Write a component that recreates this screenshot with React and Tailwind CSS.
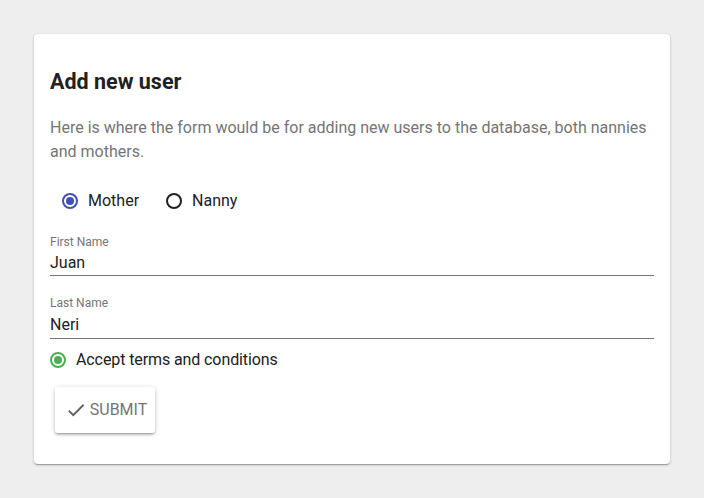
export default function App() {
  return (
    <div className="min-h-[498px] w-full bg-[#eeeeee] pt-[34px] pl-[34px] font-['Roboto',sans-serif]">
      <div className="w-[636px] h-[430px] rounded-[4px] bg-white shadow-[0_1px_3px_rgba(0,0,0,0.2),0_1px_1px_rgba(0,0,0,0.14),0_2px_1px_-1px_rgba(0,0,0,0.12)] px-4 pt-[34px]">
        <h2 className="text-[21.5px] leading-7 font-bold text-[#212121]">Add new user</h2>
        <p className="mt-5 text-[16px] leading-6 text-[#757575]">
          Here is where the form would be for adding new users to the database, both nannies and mothers.
        </p>

        {/* radios */}
        <div className="mt-[25px] flex items-center h-6 pl-3">
          <div className="flex items-center">
            <span className="w-4 h-4 rounded-full border-2 border-[#3f51b5] grid place-items-center">
              <span className="w-2 h-2 rounded-full bg-[#3f51b5]" />
            </span>
            <span className="ml-[10px] text-[16px] text-[#212121]">Mother</span>
          </div>
          <div className="flex items-center ml-[27px]">
            <span className="w-4 h-4 rounded-full border-2 border-[#212121]" />
            <span className="ml-[10px] text-[16px] text-[#212121]">Nanny</span>
          </div>
        </div>

        <Field label="First Name" value="Juan" className="mt-[21px]" gap="mt-[1px]" pad="pb-0" />
        <Field label="Last Name" value="Neri" className="mt-[19px]" gap="mt-[2px]" pad="pb-[1px]" />

        <div className="mt-[9px] flex items-center h-6">
          <span className="w-4 h-4 rounded-full border-2 border-[#4caf50] grid place-items-center">
            <span className="w-2 h-2 rounded-full bg-[#4caf50]" />
          </span>
          <span className="ml-[10px] text-[16px] tracking-[-0.1px] text-[#212121]">Accept terms and conditions</span>
        </div>

        <button className="mt-[15px] ml-[5px] w-[100px] h-[46px] rounded-[3px] bg-white flex items-center justify-center gap-[3px] pl-[2px] text-[16px] text-[#757575] shadow-[0_1px_5px_rgba(0,0,0,0.2),0_2px_2px_rgba(0,0,0,0.14),0_3px_1px_-2px_rgba(0,0,0,0.12)]">
          <svg width="22" height="22" viewBox="0 0 24 24">
            <path d="M9 16.17 4.83 12l-1.42 1.41L9 19 21 7l-1.41-1.41z" fill="#616161" />
          </svg>
          SUBMIT
        </button>
      </div>
    </div>
  );
}

function Field({ label, value, className, gap, pad }) {
  return (
    <div className={className}>
      <div className="text-[12px] leading-4 text-[#757575]">{label}</div>
      <div className={`${gap} ${pad} text-[16px] leading-6 text-[#212121] border-b border-[#757575]`}>{value}</div>
    </div>
  );
}
